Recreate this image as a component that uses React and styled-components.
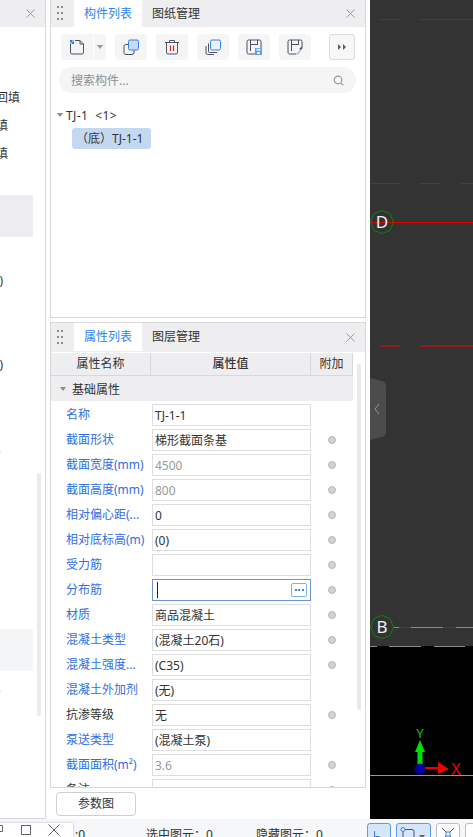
import React from 'react';
import styled, { createGlobalStyle } from 'styled-components';

const GlobalStyle = createGlobalStyle`
  html, body {
    margin: 0;
    padding: 0;
    background: #fff;
  }
  body {
    font-family: "Noto Sans", "Noto Sans CJK SC", sans-serif;
    font-size: 12px;
    color: #333;
  }
`;

const Page = styled.div`
  position: relative;
  width: 473px;
  height: 837px;
  overflow: hidden;
  display: flex;
  flex-direction: column;
`;

const Main = styled.div`
  display: flex;
  height: 819px;
  flex: none;
`;

// left tree, only a sliver of it is visible
const LeftPanel = styled.aside`
  position: relative;
  width: 46px;
  box-sizing: border-box;
  height: 819px;
  border-right: 1px solid #d8d8d8;
  border-bottom: 1px solid #d8d8d8;
  overflow: hidden;
  flex: none;
`;

const LeftHeader = styled.div`
  height: 27px;
  background: #eeeef0;
  display: flex;
  align-items: center;
  justify-content: flex-end;
  padding-right: 10px;
`;

const LeftList = styled.div`
  padding-top: 56px;
  width: 33px;
`;

const LeftRow = styled.div`
  height: ${p => p.$h || 28}px;
  line-height: ${p => (p.$h || 28) + 1}px;
  background: ${p => p.$bg || 'transparent'};
  display: flex;
  justify-content: flex-end;
  white-space: nowrap;
  overflow: hidden;
  padding-right: ${p => p.$pr || 13}px;
  color: ${p => p.$color || '#333'};
`;

const LeftScroll = styled.div`
  position: absolute;
  left: 37px;
  top: 473px;
  width: 4px;
  height: 243px;
  border-radius: 2px;
  background: #ebebeb;
`;

const MiddleColumn = styled.div`
  width: 316px;
  margin-left: 4px;
  display: flex;
  flex-direction: column;
  flex: none;
`;

const Panel = styled.section`
  box-sizing: border-box;
  height: ${p => p.$h}px;
  border: 1px solid #d8d8d8;
  border-top: ${p => (p.$noTop ? 'none' : '1px solid #d8d8d8')};
  overflow: hidden;
  flex: none;
  margin-top: ${p => p.$mt || 0}px;
`;

const PanelHeader = styled.div`
  height: ${p => p.$h || 27}px;
  background: #eeeef0;
  display: flex;
  align-items: flex-start;
`;

const Grip = styled.div`
  width: 6px;
  margin: ${p => p.$top || 6}px 11px 0 6px;
  display: grid;
  grid-template-columns: 2px 2px;
  justify-content: space-between;
  row-gap: 4px;
  span {
    width: 2px;
    height: 2px;
    background: #8a8a8a;
  }
`;

const Tab = styled.div`
  width: 68px;
  height: ${p => p.$h || 27}px;
  line-height: ${p => p.$h || 27}px;
  text-align: center;
  background: ${p => (p.$active ? '#fff' : 'transparent')};
  color: ${p => (p.$active ? '#2c84f0' : '#333')};
  margin-right: ${p => (p.$active ? 0 : 'auto')};
`;

const CloseBtn = styled.div`
  display: flex;
  align-items: center;
  justify-content: center;
  width: 9px;
  height: 9px;
  margin: ${p => p.$top || 9}px 10px 0 0;
`;

const Toolbar = styled.div`
  display: flex;
  padding: 7px 0 0 10px;
  height: 26px;
`;

const ToolBtn = styled.div`
  width: 32px;
  height: 26px;
  background: #f5f5f5;
  border-radius: 4px;
  display: flex;
  align-items: center;
  justify-content: center;
  margin-right: 9px;
`;

const SplitBtn = styled(ToolBtn)`
  width: 45px;
  justify-content: flex-start;
`;

const SplitMain = styled.div`
  width: 32px;
  height: 26px;
  display: flex;
  align-items: center;
  justify-content: center;
  border-right: 1px solid #fff;
`;

const SplitArrow = styled.div`
  flex: 1;
  display: flex;
  align-items: center;
  justify-content: center;
`;

const Caret = styled.i`
  display: block;
  width: 0;
  height: 0;
  margin-top: ${p => p.$mt || 0}px;
  border-left: 3.5px solid transparent;
  border-right: 3.5px solid transparent;
  border-top: 4px solid ${p => p.$color || '#999'};
`;

const MoreBtn = styled.div`
  box-sizing: border-box;
  width: 26px;
  height: 26px;
  margin-left: 9px;
  border: 1px solid #dcdcdc;
  border-radius: 3px;
  background: #f7f7f7;
  display: flex;
  align-items: center;
  justify-content: center;
`;

const Search = styled.div`
  height: 26px;
  margin: 7px 9px 0 8px;
  border-radius: 13px;
  background: #f5f5f5;
  display: flex;
  align-items: center;
  justify-content: space-between;
  padding: 0 12px;
  color: #8f8f8f;
`;

const Tree = styled.div`
  padding: 12px 0 0 6px;
`;

const TreeRoot = styled.div`
  display: flex;
  align-items: center;
  height: 20px;
  white-space: pre;
  gap: 3px;
  letter-spacing: 0.4px;
`;

const TreeLeaf = styled.div`
  width: 79px;
  height: 21px;
  line-height: 21px;
  box-sizing: border-box;
  margin: 3px 0 0 15px;
  padding-left: 4px;
  border-radius: 3px;
  background: #c3d9f1;
  white-space: nowrap;
`;

const TableWrap = styled.div`
  display: flex;
`;

const Table = styled.div`
  width: 302px;
  flex: none;
`;

const TableHead = styled.div`
  margin-top: 1px;
  height: 23px;
  display: grid;
  grid-template-columns: 100px 160px 42px;
  background: #eeeef0;
  border-bottom: 1px solid #d8d8d8;
  box-sizing: border-box;
`;

const HeadCell = styled.div`
  line-height: 22px;
  text-align: center;
  font-weight: ${p => (p.$bold ? 500 : 400)};
  border-right: 1px solid #d8d8d8;
`;

const GroupRow = styled.div`
  height: 25px;
  display: flex;
  align-items: center;
  gap: 6px;
  padding-left: 9px;
  background: #eeeef0;
`;

const Rows = styled.div`
  padding-top: 3px;
`;

const PropRow = styled.div`
  display: grid;
  grid-template-columns: 101px 159px 42px;
  height: 25px;
  align-items: start;
`;

const PropLabel = styled.div`
  line-height: 22px;
  padding-left: 15px;
  white-space: nowrap;
  color: ${p => (p.$plain ? '#333' : '#2f6fe4')};
`;

const ValueBox = styled.div`
  box-sizing: border-box;
  height: 22px;
  line-height: 19px;
  padding-left: 2px;
  border: 1px solid ${p => (p.$active ? '#6d92cf' : '#dedede')};
  color: ${p => (p.$muted ? '#999' : '#333')};
  display: flex;
  align-items: center;
  justify-content: space-between;
  white-space: nowrap;
`;

const TextCaret = styled.i`
  display: block;
  width: 1px;
  height: 16px;
  margin-left: 2px;
  background: #222;
`;

const DotsBtn = styled.div`
  box-sizing: border-box;
  width: 16px;
  height: 14px;
  margin-right: 3px;
  border: 1px solid #79b0f2;
  border-radius: 2px;
  display: flex;
  align-items: center;
  justify-content: center;
  gap: 1.5px;
  span {
    width: 2px;
    height: 2px;
    background: #3f86e0;
  }
`;

const Dot = styled.div`
  justify-self: center;
  box-sizing: border-box;
  width: 8px;
  height: 8px;
  margin-top: 7px;
  border-radius: 50%;
  background: #d2d2d2;
  border: 1px solid #b8b8b8;
`;

const ScrollTrack = styled.div`
  width: 4px;
  height: 346px;
  margin: 12px 0 0 4px;
  border-radius: 2px;
  background: #e9e9e9;
  flex: none;
`;

const Footer = styled.div`
  padding: 4px 0 0 6px;
`;

const ParamBtn = styled.div`
  box-sizing: border-box;
  width: 80px;
  height: 24px;
  line-height: 22px;
  text-align: center;
  border: 1px solid #cfcfcf;
  border-radius: 4px;
`;

const Viewport = styled.div`
  position: relative;
  margin-left: 4px;
  width: 103px;
  height: 819px;
  flex: none;
  background: #000;
  svg.cad {
    display: block;
  }
`;

const Handle = styled.div`
  position: absolute;
  left: 0;
  top: 378px;
  svg {
    display: block;
  }
`;

const StatusBar = styled.footer`
  height: 18px;
  background: #f6f7f9;
  display: flex;
  overflow: hidden;
`;

const StatusText = styled.div`
  margin-top: 7px;
  line-height: 17px;
  white-space: nowrap;
  margin-left: ${p => p.$ml}px;
`;

const SnapGroup = styled.div`
  display: flex;
  padding-top: 4px;
  margin-left: 44px;
  gap: 5px;
`;

const SnapBtn = styled.div`
  box-sizing: border-box;
  width: ${p => p.$w}px;
  height: 24px;
  flex: none;
  border: 1px solid ${p => (p.$on ? '#5b9be9' : '#bdbdbd')};
  border-radius: 3px;
  background: ${p => (p.$on ? '#d5e5fa' : '#fff')};
  display: flex;
  align-items: flex-start;
  padding: 3px 0 0 3px;
  gap: 3px;
`;

const WindowControls = styled.div`
  position: absolute;
  left: 0;
  top: 823px;
  width: 73px;
  height: 16px;
  background: #fff;
  box-shadow: 0 0 2px rgba(90, 110, 160, 0.5);
  svg {
    display: block;
  }
`;

const ink = '#4b5168';

const CloseIcon = () => (
  <svg width="9" height="9" viewBox="0 0 9 9" fill="none" stroke="#9a9a9a" strokeWidth="1">
    <path d="M.5.5l8 8M8.5.5l-8 8" />
  </svg>
);

const NewIcon = () => (
  <svg width="16" height="16" viewBox="0 0 16 16" fill="none">
    <path d="M1.5 5v8.5a1.5 1.5 0 0 0 1.5 1.5h10a1.5 1.5 0 0 0 1.5-1.5V5l-3.5-3.5H6" stroke={ink} />
    <path d="M11 1.5V5h3.5" stroke={ink} />
    <path d="M1 1h2v2H1zM3 3h2v2H3z" fill="#2f7ee8" />
    <path d="M3 1h2v2H3zM1 3h2v2H1z" fill="#8db8f0" />
  </svg>
);

const CopyIcon = () => (
  <svg width="16" height="16" viewBox="0 0 16 16" fill="none">
    <rect x="1" y="5.5" width="10" height="10" rx="2" stroke={ink} />
    <rect x="5.5" y="1" width="10" height="10" rx="1.5" fill="#c6d9f5" stroke="#3a80e0" />
  </svg>
);

const TrashIcon = () => (
  <svg width="16" height="16" viewBox="0 0 16 16" fill="none">
    <path d="M1 3.5h14M5.5 3.5V1.5h5v2M2.5 3.5v10a1.5 1.5 0 0 0 1.5 1.5h8a1.5 1.5 0 0 0 1.5-1.5v-10" stroke={ink} />
    <path d="M6.5 6.5v5.5M9.5 6.5v5.5" stroke="#d8202a" strokeWidth="1.2" />
  </svg>
);

const LayersIcon = () => (
  <svg width="16" height="16" viewBox="0 0 16 16" fill="none">
    <path d="M3.5 4.5v8a1 1 0 0 0 1 1h7.5" stroke={ink} />
    <path d="M1 7v7a1.5 1.5 0 0 0 1.5 1.5H9" stroke={ink} />
    <rect x="5.5" y="1" width="10" height="10" rx="1.5" fill="#e8f1fc" stroke="#3a80e0" />
  </svg>
);

const PlanBase = () => (
  <>
    <path d="M15 9V2.5A1.5 1.5 0 0 0 13.5 1h-11A1.5 1.5 0 0 0 1 2.5v11A1.5 1.5 0 0 0 2.5 15H9" stroke={ink} />
    <path d="M4.5 1v11M11.5 1v5M4.5 5.5h7" stroke={ink} />
  </>
);

const PlanSaveIcon = () => (
  <svg width="16" height="16" viewBox="0 0 16 16" fill="none">
    <PlanBase />
    <rect x="9" y="9" width="7" height="7" fill="#5f9df0" />
    <rect x="10.5" y="9.8" width="4" height="2" fill="#e8f1fc" />
    <rect x="11" y="13" width="3" height="2" fill="#e8f1fc" />
  </svg>
);

const PlanPickIcon = () => (
  <svg width="16" height="16" viewBox="0 0 16 16" fill="none">
    <PlanBase />
    <path d="M9.5 15.5l4-4" stroke="#9db6dc" strokeWidth="1.4" />
    <path d="M13 10.5l2-2" stroke="#555a6c" strokeWidth="2" />
  </svg>
);

const ForwardIcon = () => (
  <svg width="10" height="8" viewBox="0 0 10 8" fill="#555b6e">
    <path d="M1 1l3 3-3 3zM6 1l3 3-3 3z" />
  </svg>
);

const SearchIcon = () => (
  <svg width="11" height="11" viewBox="0 0 11 11" fill="none" stroke="#999" strokeWidth="1.2">
    <circle cx="5" cy="5" r="3.8" />
    <path d="M8 8l2.4 2.4" />
  </svg>
);

const CadDrawing = () => (
  <svg className="cad" width="103" height="819" viewBox="0 0 103 819">
    <rect width="103" height="646" fill="#333" />
    <g stroke="#9b1a1a" strokeWidth="1" fill="none">
      <path d="M10 19.5h20M50 19.5h53" />
      <path d="M0 183.5h30M50 183.5h21M91 183.5h12" />
    </g>
    <path d="M10 346h20M50 346h53" stroke="#8f1c1c" strokeWidth="2" />
    <path d="M0 222.5h103" stroke="#e00000" strokeWidth="1" />
    <path d="M24 627.5h79" stroke="#8a8a8a" strokeWidth="1" />
    <path d="M29 627.5h12M73 627.5h13" stroke="#9b1a1a" strokeWidth="1" />
    <path d="M0 646.5h7M19 646.5h32M64 646.5h31" stroke="#8a8a8a" strokeWidth="1" />
    <path d="M0 775.5h103" stroke="#2ee02e" strokeWidth="1" />
    <g fill="none" stroke="#128012" strokeWidth="1">
      <polygon points="12,210.5 20,213.5 23.5,222 20,230.5 12,233.5 4,230.5 .5,222 4,213.5" />
      <polygon points="12,615.5 20,618.5 23.5,627 20,635.5 12,638.5 4,635.5 .5,627 4,618.5" />
    </g>
    <g fill="#f0f0f0" fontFamily="'Noto Sans', sans-serif" fontSize="17" textAnchor="middle">
      <text x="12" y="228">D</text>
      <text x="12" y="633">B</text>
    </g>
    <path d="M47.5 769v-17h-2.5l5-12 5 12h-2.5v17z" fill="#00e000" />
    <path d="M50 767h18v-5l11 7-11 5v-5h-18z" fill="#f00000" />
    <circle cx="50" cy="769" r="5.5" fill="#0000a0" />
    <text x="50" y="738" fill="#00d000" fontFamily="'Noto Sans', sans-serif" fontSize="13" textAnchor="middle">Y</text>
    <text x="86" y="775" fill="#f00000" fontFamily="'Noto Sans', sans-serif" fontSize="16" textAnchor="middle">X</text>
  </svg>
);

const gridRows = [
  { name: '名称', value: 'TJ-1-1', noDot: true },
  { name: '截面形状', value: '梯形截面条基' },
  { name: '截面宽度(mm)', value: '4500', muted: true },
  { name: '截面高度(mm)', value: '800', muted: true },
  { name: '相对偏心距(...', value: '0' },
  { name: '相对底标高(m)', value: '(0)' },
  { name: '受力筋', value: '' },
  { name: '分布筋', value: '', active: true },
  { name: '材质', value: '商品混凝土' },
  { name: '混凝土类型', value: '(混凝土20石)' },
  { name: '混凝土强度...', value: '(C35)' },
  { name: '混凝土外加剂', value: '(无)', noDot: true },
  { name: '抗渗等级', value: '无', plain: true },
  { name: '泵送类型', value: '(混凝土泵)', noDot: true },
  { name: '截面面积(m²)', value: '3.6', muted: true },
  { name: '备注', value: '', plain: true },
];

const GripDots = ({ top }) => (
  <Grip $top={top}>
    {[0, 1, 2, 3, 4, 5].map(i => <span key={i} />)}
  </Grip>
);

const App = () => (
  <Page>
    <GlobalStyle />
    <Main>
      <LeftPanel>
        <LeftHeader><CloseIcon /></LeftHeader>
        <LeftList>
          <LeftRow $pr={13}>回填</LeftRow>
          <LeftRow $pr={25}>填</LeftRow>
          <LeftRow $pr={25}>填</LeftRow>
          <LeftRow />
          <LeftRow $h={42} $bg="#ededf0" />
          <LeftRow $h={29} />
          <LeftRow $h={28} $pr={30}>)</LeftRow>
          <LeftRow $h={56} />
          <LeftRow $h={28} $pr={30}>)</LeftRow>
          <LeftRow $h={56} />
          <LeftRow $h={28} $pr={32} $color="#35d8f5">.</LeftRow>
          <LeftRow $h={167} />
          <LeftRow $h={42} $bg="#f4f5f7" />
          <LeftRow $h={32} $pr={32} $color="#35d8f5">.</LeftRow>
        </LeftList>
        <LeftScroll />
      </LeftPanel>

      <MiddleColumn>
        <Panel $h={318} $noTop>
          <PanelHeader>
            <GripDots />
            <Tab $active>构件列表</Tab>
            <Tab>图纸管理</Tab>
            <CloseBtn><CloseIcon /></CloseBtn>
          </PanelHeader>
          <Toolbar>
            <SplitBtn>
              <SplitMain><NewIcon /></SplitMain>
              <SplitArrow><Caret /></SplitArrow>
            </SplitBtn>
            <ToolBtn><CopyIcon /></ToolBtn>
            <ToolBtn><TrashIcon /></ToolBtn>
            <ToolBtn><LayersIcon /></ToolBtn>
            <ToolBtn><PlanSaveIcon /></ToolBtn>
            <ToolBtn><PlanPickIcon /></ToolBtn>
            <MoreBtn><ForwardIcon /></MoreBtn>
          </Toolbar>
          <Search>
            <span>搜索构件...</span>
            <SearchIcon />
          </Search>
          <Tree>
            <TreeRoot><Caret $color="#8a8a8a" />{'TJ-1  <1>'}</TreeRoot>
            <TreeLeaf>（底）TJ-1-1</TreeLeaf>
          </Tree>
        </Panel>

        <Panel $h={466} $mt={4}>
          <PanelHeader $h={29}>
            <GripDots top={7} />
            <Tab $active $h={28}>属性列表</Tab>
            <Tab $h={28}>图层管理</Tab>
            <CloseBtn $top={10}><CloseIcon /></CloseBtn>
          </PanelHeader>
          <TableWrap>
            <Table>
              <TableHead>
                <HeadCell>属性名称</HeadCell>
                <HeadCell $bold>属性值</HeadCell>
                <HeadCell>附加</HeadCell>
              </TableHead>
              <GroupRow><Caret $color="#8a8a8a" />基础属性</GroupRow>
              <Rows>
                {gridRows.map(row => (
                  <PropRow key={row.name}>
                    <PropLabel $plain={row.plain}>{row.name}</PropLabel>
                    <ValueBox $muted={row.muted} $active={row.active}>
                      {row.active ? <TextCaret /> : row.value}
                      {row.active && <DotsBtn><span /><span /><span /></DotsBtn>}
                    </ValueBox>
                    {!row.noDot && <Dot />}
                  </PropRow>
                ))}
              </Rows>
            </Table>
            <ScrollTrack />
          </TableWrap>
        </Panel>

        <Footer><ParamBtn>参数图</ParamBtn></Footer>
      </MiddleColumn>

      <Viewport>
        <CadDrawing />
        <Handle>
          <svg width="16" height="62" viewBox="0 0 16 62">
            <path d="M0 0l12 3q4 1 4 5v46q0 4-4 5L0 62z" fill="#4c4c4c" />
            <path d="M9 26l-4 5 4 5" fill="none" stroke="#9a9a9a" strokeWidth="1" />
          </svg>
        </Handle>
      </Viewport>
    </Main>

    <StatusBar>
      <StatusText $ml={75}>:0</StatusText>
      <StatusText $ml={61}>选中图元：0</StatusText>
      <StatusText $ml={43}>隐藏图元：0</StatusText>
      <SnapGroup>
        <SnapBtn $w={24} $on>
          <svg width="10" height="14" viewBox="0 0 10 14" fill="none" stroke="#3f7fd8">
            <path d="M3.5 4v9M3.5 9.5h5v4" />
          </svg>
        </SnapBtn>
        <SnapBtn $w={35} $on>
          <svg width="16" height="14" viewBox="0 0 16 14" fill="none" stroke={ink}>
            <path d="M5 2.5h7a2 2 0 0 1 2 2v9.5M3 5v9" />
            <circle cx="3" cy="2.5" r="2" stroke="#3f7fd8" />
          </svg>
          <Caret $color="#666" $mt={8} />
        </SnapBtn>
        <SnapBtn $w={24}>
          <svg width="16" height="14" viewBox="0 0 16 14" fill="none" stroke={ink}>
            <path d="M2 1l12 12M14 1L2 13" />
            <rect x="6" y="5" width="4" height="4" fill="#fff" stroke="#3f7fd8" />
          </svg>
        </SnapBtn>
        <SnapBtn $w={24} />
      </SnapGroup>
    </StatusBar>

    <WindowControls>
      <svg width="73" height="16" viewBox="0 0 73 16" fill="none" stroke="#666">
        <path d="M-1 2.5h3.5v6h-3" />
        <rect x="21.5" y="2.5" width="9" height="9" />
        <path d="M48.5 1.5l11 11M59.5 1.5l-11 11" />
      </svg>
    </WindowControls>
  </Page>
);

export default App;
